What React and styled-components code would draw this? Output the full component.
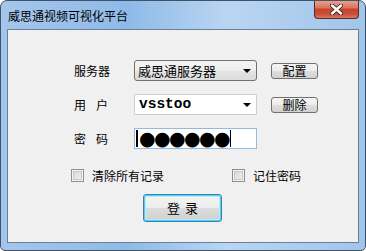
import styled, { createGlobalStyle } from "styled-components";

const GlobalStyle = createGlobalStyle`
  html, body {
    margin: 0;
    padding: 0;
    background: #ffffff;
  }
  body {
    font-family: "Noto Sans CJK SC", "Noto Sans", sans-serif;
  }
`;

// Window frame

const Window = styled.div`
  width: 366px;
  height: 251px;
  box-sizing: border-box;
  border: 1px solid #3f5266;
  border-radius: 7px 7px 5px 5px;
  background: linear-gradient(90deg, #a4c6ec 0%, #8fbae8 35%, #b9d5f2 62%, #a2c5ec 100%);
  display: flex;
  flex-direction: column;
  overflow: hidden;
`;

const TitleBar = styled.div`
  height: 28px;
  display: flex;
  justify-content: space-between;
  align-items: flex-start;
  padding-left: 7px;
  padding-right: 6px;
`;

const Title = styled.div`
  font-size: 12px;
  line-height: 12px;
  margin-top: 9px;
  color: #000;
`;

const CloseButton = styled.div`
  width: 45px;
  height: 19px;
  margin-top: -1px;
  box-sizing: border-box;
  border: 1px solid #5e2a22;
  border-top: none;
  border-radius: 0 0 4px 4px;
  background: linear-gradient(#e9a895 0%, #d9775f 42%, #c6432b 52%, #c9503a 80%, #d87a5e 100%);
  display: flex;
  align-items: center;
  justify-content: center;
`;

const Client = styled.div`
  flex: 1;
  margin: 0 6px 7px 6px;
  border: 1px solid #6c7f95;
  background: #f0f0f0;
  padding: 30px 0 0 66px;
  display: flex;
  flex-direction: column;
`;

// Form

const Form = styled.div`
  display: grid;
  grid-template-columns: 46px 123px 47px;
  column-gap: 14px;
  row-gap: 13px;
  align-items: center;
`;

const Label = styled.div`
  font-size: 12px;
  color: #000;
  white-space: nowrap;
  letter-spacing: ${(p) => p.$spread || 0}px;
`;

const Combo = styled.div`
  height: 21px;
  box-sizing: border-box;
  border: 1px solid ${(p) => (p.$editable ? "#c7ced8" : "#707070")};
  border-radius: ${(p) => (p.$editable ? "1px" : "3px")};
  background: ${(p) =>
    p.$editable
      ? "#ffffff"
      : "linear-gradient(#f4f4f4 0%, #eeeeee 50%, #e4e4e4 51%, #dcdcdc 100%)"};
  display: flex;
  align-items: center;
  justify-content: space-between;
  padding: 0 4px 0 3px;
`;

const ComboText = styled.span`
  font-size: 13px;
  color: #000;
`;

const UserText = styled.span`
  font-family: "Liberation Mono", "Courier New", monospace;
  font-weight: bold;
  font-size: 14.5px;
  color: #000;
  margin-left: 1px;
  margin-top: -2px;
`;

const Arrow = styled.span`
  width: 0;
  height: 0;
  border-left: 4px solid transparent;
  border-right: 4px solid transparent;
  border-top: 4px solid #000;
  margin-right: 1px;
`;

const SmallButton = styled.div`
  height: 16px;
  box-sizing: border-box;
  border: 1px solid #707070;
  border-radius: 3px;
  background: linear-gradient(#f4f4f4 0%, #ececec 50%, #dedede 51%, #d2d2d2 100%);
  font-size: 12px;
  line-height: 14px;
  text-align: center;
  color: #000;
`;

const Password = styled.div`
  height: 21px;
  box-sizing: border-box;
  border: 1px solid #8ebce8;
  background: #ffffff;
  display: flex;
  align-items: center;
  padding-left: 1px;
`;

const Dots = styled.span`
  height: 17px;
  border-left: 2px solid #000;
  border-right: 1px solid #000;
  padding-left: 1px;
  padding-right: 1px;
  font-family: "DejaVu Sans", sans-serif;
  font-size: 19px;
  line-height: 17px;
  letter-spacing: -1.6px;
  color: #000;
`;

// Options

const Options = styled.div`
  display: flex;
  margin-top: 18px;
  margin-left: -3px;
`;

const Option = styled.label`
  display: flex;
  align-items: center;
  gap: 8px;
  width: ${(p) => p.$width}px;
  font-size: 12px;
  color: #000;
`;

const CheckBox = styled.span`
  width: 13px;
  height: 13px;
  box-sizing: border-box;
  border: 1px solid #8e8f8f;
  background: linear-gradient(135deg, #d4d4d4 0%, #e6e6e6 60%, #f4f4f4 100%);
  box-shadow: inset 0 0 0 1px #f4f4f4, inset 0 0 0 2px #c8c8c8;
`;

const LoginRow = styled.div`
  margin-top: 10px;
  margin-left: 69px;
`;

const LoginButton = styled.div`
  width: 79px;
  height: 28px;
  box-sizing: border-box;
  border: 1px solid #3c7fb1;
  border-radius: 3px;
  background: linear-gradient(#f5f5f5 0%, #ececec 50%, #dcdcdc 51%, #d0d0d0 100%);
  box-shadow: inset 0 0 0 1px #4ed1f5, inset 0 0 0 2px #b8ecfb;
  font-size: 13px;
  line-height: 26px;
  text-align: center;
  letter-spacing: 5px;
  padding-left: 5px;
  color: #000;
`;

export default function App() {
  return (
    <>
      <GlobalStyle />
      <Window>
        <TitleBar>
          <Title>威思通视频可视化平台</Title>
          <CloseButton>
            <svg width="13" height="11" viewBox="0 0 13 11">
              <path
                d="M2 1.5 L11 9.5 M11 1.5 L2 9.5"
                stroke="#3a2420"
                strokeWidth="4.2"
                strokeLinecap="round"
              />
              <path
                d="M2 1.5 L11 9.5 M11 1.5 L2 9.5"
                stroke="#ffffff"
                strokeWidth="2.4"
                strokeLinecap="round"
              />
            </svg>
          </CloseButton>
        </TitleBar>
        <Client>
          <Form>
            <Label>服务器</Label>
            <Combo>
              <ComboText>威思通服务器</ComboText>
              <Arrow />
            </Combo>
            <SmallButton>配置</SmallButton>

            <Label $spread={10}>用户</Label>
            <Combo $editable>
              <UserText>vsstoo</UserText>
              <Arrow />
            </Combo>
            <SmallButton>删除</SmallButton>

            <Label $spread={10}>密码</Label>
            <Password>
              <Dots>●●●●●●</Dots>
            </Password>
            <span />
          </Form>
          <Options>
            <Option $width={161}>
              <CheckBox />
              清除所有记录
            </Option>
            <Option $width={80}>
              <CheckBox />
              记住密码
            </Option>
          </Options>
          <LoginRow>
            <LoginButton>登录</LoginButton>
          </LoginRow>
        </Client>
      </Window>
    </>
  );
}
